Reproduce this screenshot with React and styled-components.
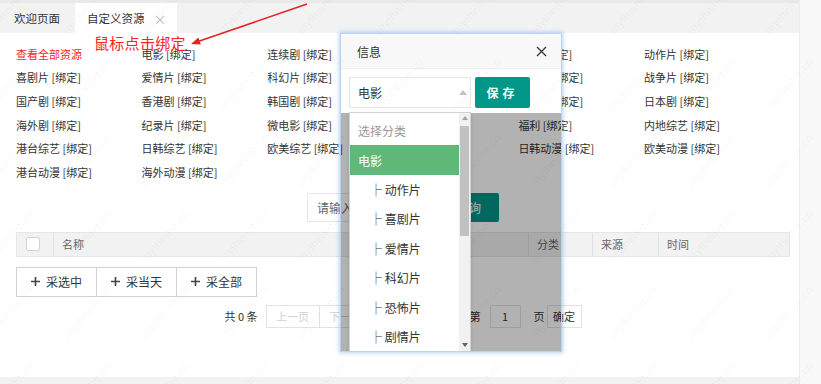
import React from "react";
import styled, { createGlobalStyle, css } from "styled-components";

const GlobalStyle = createGlobalStyle`
  html, body { margin: 0; padding: 0; background: #fff; }
  body {
    font-family: "Noto Sans CJK SC", "Noto Sans", sans-serif;
    color: #333;
    width: 821px;
    height: 384px;
    overflow: hidden;
  }
  * { box-sizing: border-box; }
`;

const Screen = styled.div`
  position: relative;
  width: 821px;
  height: 384px;
  display: flex;
  background: #f8f8f8;
  overflow: hidden;
`;

const Main = styled.div`
  width: 800px;
  display: flex;
  flex-direction: column;
  border-right: 1px solid #ececec;
`;

const TabBar = styled.div`
  height: 33px;
  display: flex;
  align-items: flex-end;
  background: #f2f2f2;
  border-top: 3px solid #e9e9e9;
`;

const Tab = styled.div`
  height: 30px;
  display: flex;
  align-items: center;
  gap: 9px;
  font-size: 11.5px;
  color: #333;
  padding: ${(p) => (p.$active ? "0 10px 0 12px" : "0 15px 0 14px")};
  background: ${(p) => (p.$active ? "#fff" : "transparent")};
`;

const TabClose = styled.span`
  color: #b5b5b5;
  font-size: 13px;
  line-height: 1;
`;

const Panel = styled.div`
  flex: 1;
  background: #fff;
  padding: 9px 9px 0 16px;
  display: flex;
  flex-direction: column;
`;

const BottomStrip = styled.div`
  height: 7px;
  background: #f2f2f2;
`;

const LinkGrid = styled.div`
  display: grid;
  grid-template-columns: repeat(6, 125.6px);
  grid-auto-rows: 23.6px;
  align-items: center;
  font-size: 11px;
`;

const Link = styled.span`
  color: ${(p) => (p.$red ? "#f22" : "#333")};
  white-space: nowrap;
`;

const SearchRow = styled.div`
  margin-top: 9.4px;
  height: 29px;
  display: flex;
  justify-content: center;
  gap: 2px;
`;

const SearchInput = styled.div`
  width: 130px;
  border: 1px solid #e6e6e6;
  font-size: 12px;
  color: #666;
  display: flex;
  align-items: center;
  padding-left: 9px;
`;

const PrimaryButton = styled.div`
  width: ${(p) => p.$w}px;
  background: #009688;
  color: #fff;
  font-size: 12px;
  display: flex;
  align-items: center;
  justify-content: center;
  border-radius: 2px;
  letter-spacing: ${(p) => (p.$spaced ? "4px" : "0")};
  font-weight: ${(p) => (p.$spaced ? 700 : 400)};
`;

const TableHead = styled.div`
  margin-top: 10px;
  height: 25px;
  display: flex;
  background: #f2f2f2;
  border: 1px solid #e6e6e6;
  font-size: 11px;
  color: #666;
`;

const HeadCell = styled.div`
  display: flex;
  align-items: center;
  padding: 0 8px;
  border-right: 1px solid #e2e2e2;
  ${(p) => (p.$w ? css`width: ${p.$w}px;` : css`flex: 1;`)}
  &:last-child { border-right: none; }
`;

const CheckBox = styled.span`
  width: 14px;
  height: 14px;
  background: #fff;
  border: 1px solid #d2d2d2;
  border-radius: 2px;
  margin-left: 1px;
`;

const BtnGroup = styled.div`
  margin-top: 10px;
  display: flex;
`;

const GroupButton = styled.div`
  width: 81px;
  height: 30px;
  border: 1px solid #d2d2d2;
  background: #fff;
  font-size: 12px;
  color: #333;
  display: flex;
  align-items: center;
  justify-content: center;
  gap: 6px;
  & + & { margin-left: -1px; }
`;

const Pager = styled.div`
  margin-top: 8px;
  height: 23px;
  display: flex;
  justify-content: center;
  align-items: stretch;
  font-size: 11px;
  color: #333;
`;

const PagerText = styled.span`
  display: flex;
  align-items: center;
  margin: ${(p) => p.$m || "0"};
`;

const PagerBox = styled.span`
  width: ${(p) => p.$w}px;
  border: 1px solid #e2e2e2;
  background: #fff;
  display: flex;
  align-items: center;
  justify-content: center;
  color: ${(p) => (p.$disabled ? "#d2d2d2" : "#333")};
  margin: ${(p) => p.$m || "0"};
`;

const Annotation = styled.div`
  position: absolute;
  left: 94px;
  top: 32px;
  font-size: 15px;
  color: #f22;
  white-space: nowrap;
  letter-spacing: 0.3px;
`;

const ArrowSvg = styled.svg`
  position: absolute;
  left: 0;
  top: 0;
  pointer-events: none;
`;

const Modal = styled.div`
  position: absolute;
  left: 340px;
  top: 33px;
  width: 222px;
  height: 319px;
  display: flex;
  flex-direction: column;
  overflow: hidden;
  border: 1px solid #b9d2f0;
  box-shadow: 0 0 4px 1px rgba(100, 160, 240, 0.45);
`;

const ModalHeader = styled.div`
  height: 35px;
  flex-shrink: 0;
  background: #f8f8f8;
  border-bottom: 1px solid #eee;
  display: flex;
  align-items: center;
  justify-content: space-between;
  padding: 0 14px 0 16px;
  font-size: 12px;
  color: #333;
`;

const ModalForm = styled.div`
  height: 44px;
  flex-shrink: 0;
  background: #fff;
  display: flex;
  gap: 4px;
  padding: 8px 0 5px 8px;
`;

const SelectBox = styled.div`
  position: relative;
  width: 122px;
  border: 1px solid #e6e6e6;
  display: flex;
  align-items: center;
  padding-left: 8px;
  font-size: 12px;
  color: #333;
  &::after {
    content: "";
    position: absolute;
    right: 3px;
    top: 12px;
    border: 4px solid transparent;
    border-bottom: 5px solid #c2c2c2;
    border-top: none;
  }
`;

const Dropdown = styled.div`
  position: absolute;
  left: -1px;
  top: 34px;
  width: 122px;
  height: 242px;
  background: #fff;
  border: 1px solid #d2d2d2;
  box-shadow: 0 2px 4px rgba(0, 0, 0, 0.12);
  display: flex;
  overflow: hidden;
  z-index: 2;
`;

const OptionList = styled.div`
  flex: 1;
  padding-top: 3px;
  display: flex;
  flex-direction: column;
  overflow: hidden;
`;

const Option = styled.div`
  height: 29.4px;
  flex-shrink: 0;
  display: flex;
  align-items: center;
  font-size: 12px;
  white-space: pre;
  padding-left: ${(p) => (p.$sub ? "20px" : "8px")};
  color: ${(p) => (p.$muted ? "#999" : p.$active ? "#fff" : "#333")};
  background: ${(p) => (p.$active ? "#5fb878" : "transparent")};
`;

const Scrollbar = styled.div`
  width: 11px;
  background: #f1f1f1;
  display: flex;
  flex-direction: column;
  align-items: center;
  padding: 3px 0 6px;
`;

const ScrollArrow = styled.span`
  width: 0;
  height: 0;
  border: 3px solid transparent;
  ${(p) =>
    p.$down
      ? css`border-top: 4px solid #606060; border-bottom: none; margin-top: auto;`
      : css`border-bottom: 4px solid #a3a3a3; border-top: none;`}
`;

const ScrollThumb = styled.span`
  width: 9px;
  height: 110px;
  margin-top: 6px;
  background: #c1c1c1;
`;

const ModalBody = styled.div`
  flex: 1;
  background: rgba(0, 0, 0, 0.3);
`;

const Watermark = styled.div`
  position: absolute;
  left: -30px;
  top: -30px;
  display: grid;
  grid-template-columns: repeat(12, 78px);
  grid-auto-rows: 76px;
  pointer-events: none;
`;

const Mark = styled.span`
  display: flex;
  align-items: center;
  justify-content: center;
  font-family: "Liberation Sans", sans-serif;
  font-size: 12px;
  color: rgba(0, 0, 0, 0.045);
  transform: rotate(-48deg);
`;

const links = [
  ["查看全部资源", true],
  ["电影"], ["连续剧"], ["综艺"], ["动漫"], ["动作片"],
  ["喜剧片"], ["爱情片"], ["科幻片"], ["恐怖片"], ["剧情片"], ["战争片"],
  ["国产剧"], ["香港剧"], ["韩国剧"], ["欧美剧"], ["台湾剧"], ["日本剧"],
  ["海外剧"], ["纪录片"], ["微电影"], ["伦理片"], ["福利"], ["内地综艺"],
  ["港台综艺"], ["日韩综艺"], ["欧美综艺"], ["国产动漫"], ["日韩动漫"], ["欧美动漫"],
  ["港台动漫"], ["海外动漫"],
];

const options = ["动作片", "喜剧片", "爱情片", "科幻片", "恐怖片", "剧情片", "战争片"];

const Plus = () => (
  <svg width="9" height="9" viewBox="0 0 9 9">
    <path d="M4.5 0v9M0 4.5h9" stroke="#444" strokeWidth="1.6" />
  </svg>
);

const CloseIcon = () => (
  <svg width="11" height="11" viewBox="0 0 11 11">
    <path d="M1 1l9 9M10 1l-9 9" stroke="#333" strokeWidth="1.3" />
  </svg>
);

export default function App() {
  return (
    <>
      <GlobalStyle />
      <Screen>
        <Main>
          <TabBar>
            <Tab>欢迎页面</Tab>
            <Tab $active>
              自定义资源 <TabClose>×</TabClose>
            </Tab>
          </TabBar>
          <Panel>
            <LinkGrid>
              {links.map(([name, red]) => (
                <Link key={name} $red={red}>
                  {red ? name : `${name} [绑定]`}
                </Link>
              ))}
            </LinkGrid>
            <SearchRow>
              <SearchInput>请输入关键字</SearchInput>
              <PrimaryButton $w={60}>查询</PrimaryButton>
            </SearchRow>
            <TableHead>
              <HeadCell $w={37}>
                <CheckBox />
              </HeadCell>
              <HeadCell>名称</HeadCell>
              <HeadCell $w={64}>分类</HeadCell>
              <HeadCell $w={66}>来源</HeadCell>
              <HeadCell $w={130}>时间</HeadCell>
            </TableHead>
            <BtnGroup>
              <GroupButton><Plus />采选中</GroupButton>
              <GroupButton><Plus />采当天</GroupButton>
              <GroupButton><Plus />采全部</GroupButton>
            </BtnGroup>
            <Pager>
              <PagerText $m="0 8px 0 0">共 0 条</PagerText>
              <PagerBox $w={54} $disabled>上一页</PagerBox>
              <PagerBox $w={54} $disabled $m="0 0 0 -1px">下一页</PagerBox>
              <PagerBox $w={76} $m="0 5px">10 条/页</PagerBox>
              <PagerText $m="0 9px 0 0">到第</PagerText>
              <PagerBox $w={31}>1</PagerBox>
              <PagerText $m="0 2px 0 13px">页</PagerText>
              <PagerBox $w={35}>确定</PagerBox>
            </Pager>
          </Panel>
          <BottomStrip />
        </Main>

        <Annotation>鼠标点击绑定</Annotation>
        <ArrowSvg width="821" height="384" viewBox="0 0 821 384">
          <line x1="307" y1="4" x2="198" y2="41.5" stroke="#e42323" strokeWidth="1.6" />
          <polygon points="191,44 200.8,44.6 198.4,37.4" fill="#e42323" />
        </ArrowSvg>

        <Modal>
          <ModalHeader>
            信息
            <CloseIcon />
          </ModalHeader>
          <ModalForm>
            <SelectBox>
              电影
              <Dropdown>
                <OptionList>
                  <Option $muted>选择分类</Option>
                  <Option $active>电影</Option>
                  {options.map((o) => (
                    <Option key={o} $sub>
                      {`├ ${o}`}
                    </Option>
                  ))}
                </OptionList>
                <Scrollbar>
                  <ScrollArrow />
                  <ScrollThumb />
                  <ScrollArrow $down />
                </Scrollbar>
              </Dropdown>
            </SelectBox>
            <PrimaryButton $w={55} $spaced>保存</PrimaryButton>
          </ModalForm>
          <ModalBody />
        </Modal>

        <Watermark>
          {Array.from({ length: 72 }).map((_, i) => (
            <Mark key={i}>mytheme.cn</Mark>
          ))}
        </Watermark>
      </Screen>
    </>
  );
}
